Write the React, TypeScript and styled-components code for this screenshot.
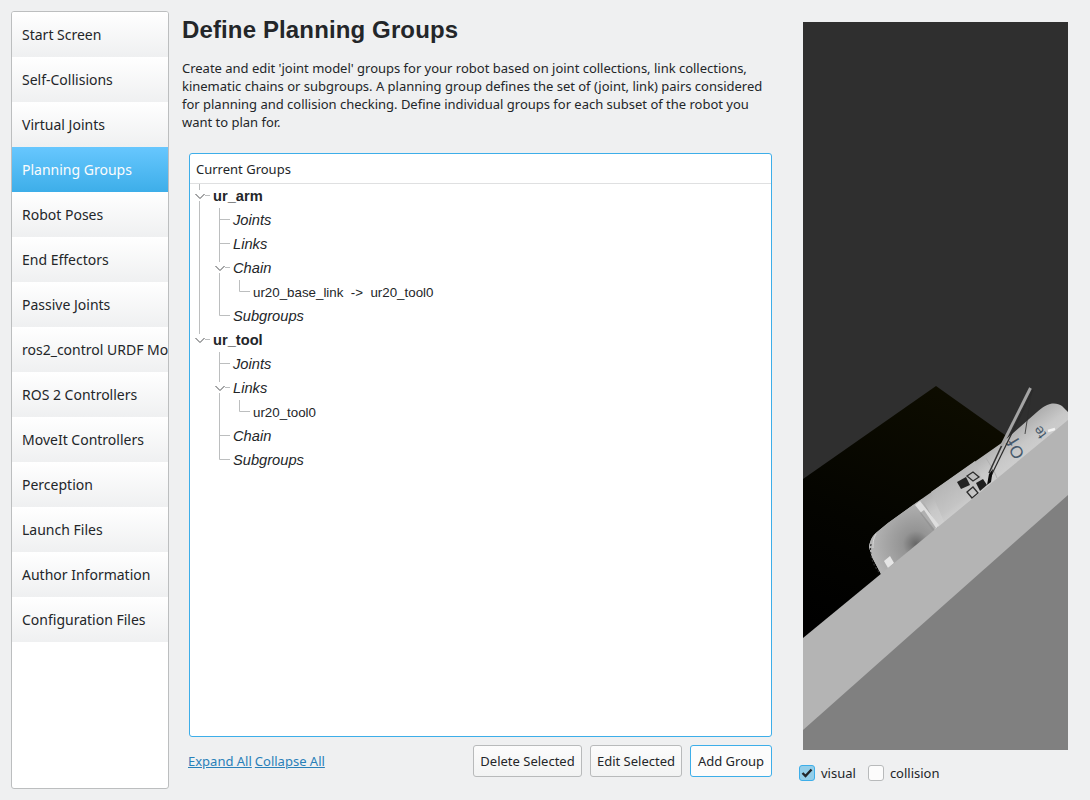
import styled, { createGlobalStyle } from 'styled-components'

const GlobalStyle = createGlobalStyle`
    html, body {
        margin: 0;
        background: #eff0f1;
    }
    body {
        font-family: "Noto Sans", sans-serif;
        font-size: 13px;
        color: #232629;
    }
`

const menuItems = [
    'Start Screen', 'Self-Collisions', 'Virtual Joints', 'Planning Groups', 'Robot Poses',
    'End Effectors', 'Passive Joints', 'ros2_control URDF Mo', 'ROS 2 Controllers',
    'MoveIt Controllers', 'Perception', 'Launch Files', 'Author Information', 'Configuration Files',
]

type Guide = 'none' | 'line' | 'tee' | 'elbow' | 'open' | 'last'
type Kind = 'group' | 'section' | 'leaf'

interface TreeRow {
    guides: Guide[]
    label: string
    kind: Kind
}

const treeRows: TreeRow[] = [
    {guides: ['open'], label: 'ur_arm', kind: 'group'},
    {guides: ['line', 'tee'], label: 'Joints', kind: 'section'},
    {guides: ['line', 'tee'], label: 'Links', kind: 'section'},
    {guides: ['line', 'open'], label: 'Chain', kind: 'section'},
    {guides: ['line', 'line', 'elbow'], label: 'ur20_base_link  ->  ur20_tool0', kind: 'leaf'},
    {guides: ['line', 'elbow'], label: 'Subgroups', kind: 'section'},
    {guides: ['last'], label: 'ur_tool', kind: 'group'},
    {guides: ['none', 'tee'], label: 'Joints', kind: 'section'},
    {guides: ['none', 'open'], label: 'Links', kind: 'section'},
    {guides: ['none', 'line', 'elbow'], label: 'ur20_tool0', kind: 'leaf'},
    {guides: ['none', 'tee'], label: 'Chain', kind: 'section'},
    {guides: ['none', 'elbow'], label: 'Subgroups', kind: 'section'},
]

const TreeGuide = ({type}: { type: Guide }) => (
    <GuideCell viewBox="0 0 20 24">
        {type !== 'none' && (
            <g stroke="#bcbebf" strokeWidth="1" fill="none">
                {type === 'line' && <path d="M9.5 0V24"/>}
                {type === 'tee' && <path d="M9.5 0V24M9.5 11.5H20"/>}
                {type === 'elbow' && <path d="M9.5 0V11.5H20"/>}
                {type === 'open' && <path d="M9.5 0V6M9.5 17V24M15 11.5H20"/>}
                {type === 'last' && <path d="M9.5 0V6M15 11.5H20"/>}
            </g>
        )}
        {(type === 'open' || type === 'last') && (
            <path d="M5.5 10L10 14.5L14.5 10" stroke="#4d4f51" strokeWidth="1" fill="none"/>
        )}
    </GuideCell>
)

const RobotView = () => (
    <ViewSvg viewBox="0 0 265 728">
        <defs>
            <linearGradient id="floor" x1="0.6" y1="0" x2="0.2" y2="1">
                <stop offset="0" stopColor="#0e0d00"/>
                <stop offset="0.6" stopColor="#040400"/>
                <stop offset="1" stopColor="#000000"/>
            </linearGradient>
            <linearGradient id="armBody" gradientUnits="userSpaceOnUse" x1="165" y1="432" x2="195" y2="472">
                <stop offset="0" stopColor="#a4a4a4"/>
                <stop offset="0.5" stopColor="#c8c8c8"/>
                <stop offset="1" stopColor="#d4d4d4"/>
            </linearGradient>
            <linearGradient id="midLink" gradientUnits="userSpaceOnUse" x1="128" y1="466" x2="158" y2="506">
                <stop offset="0" stopColor="#b4b4b4"/>
                <stop offset="0.55" stopColor="#c4c4c4"/>
                <stop offset="1" stopColor="#dedede"/>
            </linearGradient>
            <radialGradient id="elbow" gradientUnits="userSpaceOnUse" cx="113" cy="522" r="44">
                <stop offset="0" stopColor="#666666"/>
                <stop offset="0.3" stopColor="#949494"/>
                <stop offset="1" stopColor="#b4b4b4"/>
            </radialGradient>
        </defs>
        <rect width="265" height="728" fill="#2f2f2f"/>
        <path d="M0 457L133 364L202 413L265 460V620H0Z" fill="url(#floor)"/>

        <path d="M78 552L69 535L66 525C67 518 70 513 74 510L85 501L110 483L200 420L234 390C240 385 243 383 247 382C252 381 256 382 259 384L265 390V450L90 570Z" fill="url(#armBody)"/>
        <path d="M128 470L172 439L192 490L150 520Z" fill="url(#midLink)"/>
        <path d="M78 552L69 535L66 525C67 518 70 513 74 510L85 501L110 483L119 477L138 510L90 560Z" fill="url(#elbow)"/>
        <path d="M112 483L117 479L136 503L132 508Z" fill="#dedede"/>
        <path d="M117 491L121 488L133 506L130 509Z" fill="#8f8f8f" opacity="0.6"/>
        <path d="M68 522C66 532 70 544 77 551" stroke="#303030" strokeWidth="1.2" strokeDasharray="2 2" fill="none"/>
        <path d="M73 512C70 517 70 522 70 526" stroke="#d8d8d8" strokeWidth="1" fill="none"/>
        <path d="M81 539L87 534L91 541L85 546Z" fill="#e6e6e6"/>
        <path d="M183 436C188 444 192 450 194 456" stroke="#b0b0b0" strokeWidth="1" fill="none"/>

        <path d="M154 460L163 455L167 463L158 467Z" fill="#222222"/>
        <path d="M173 461L180 457L184 463L177 469Z" fill="#1e1e1e"/>
        <path d="M164 454L170 450L176 455L170 459Z" fill="none" stroke="#2c2c2c" strokeWidth="1.3"/>
        <path d="M164 470L170 465L175 471L169 476Z" fill="none" stroke="#2c2c2c" strokeWidth="1.3"/>

        <TextureText transform="translate(218.4 427) rotate(-122)" fontSize="17">O</TextureText>
        <TextureText transform="translate(215.5 416.6) rotate(-122)" fontSize="19">f</TextureText>
        <TextureText transform="translate(240.6 407.4) rotate(-126)" fontSize="14">te</TextureText>
        <path d="M245 409L252 407" stroke="#f2f2f2" strokeWidth="2.5" fill="none"/>

        <path d="M229 367L222 412" stroke="#2c2c2c" strokeWidth="0.8" fill="none"/>
        <path d="M230 368L187 456" stroke="#2a2a2a" strokeWidth="1.2" fill="none"/>
        <path d="M227.5 366L198.5 424" stroke="#a4a4a4" strokeWidth="3" fill="none"/>
        <path d="M198.5 424L186 451" stroke="#333333" strokeWidth="1.6" fill="none"/>
        <path d="M184 463L186 452L190 447L188 460Z" fill="#0c0c0c"/>

        <path d="M0 616L265 398V728H0Z" fill="#b4b4b4"/>
        <path d="M0 708L265 473V728H0Z" fill="#808080"/>
    </ViewSvg>
)

export default function App() {
    return (
        <Page>
            <GlobalStyle/>
            <Sidebar>
                {menuItems.map(item => (
                    <MenuItem key={item} $active={item === 'Planning Groups'}>{item}</MenuItem>
                ))}
            </Sidebar>
            <Content>
                <Title>Define Planning Groups</Title>
                <Description>
                    Create and edit 'joint model' groups for your robot based on joint collections, link collections,
                    kinematic chains or subgroups. A planning group defines the set of (joint, link) pairs considered
                    for planning and collision checking. Define individual groups for each subset of the robot you
                    want to plan for.
                </Description>
                <TreePanel>
                    <TreeHeader>Current Groups</TreeHeader>
                    <TreeBody>
                        {treeRows.map((row, i) => (
                            <Row key={i}>
                                {row.guides.map((g, j) => <TreeGuide key={j} type={g}/>)}
                                <RowLabel $kind={row.kind}>{row.label}</RowLabel>
                            </Row>
                        ))}
                    </TreeBody>
                </TreePanel>
                <Footer>
                    <Links>
                        <LinkText href="#">Expand All</LinkText>
                        <LinkText href="#">Collapse All</LinkText>
                    </Links>
                    <Buttons>
                        <Button $width={109}>Delete Selected</Button>
                        <Button $width={92}>Edit Selected</Button>
                        <Button $width={82} $focus>Add Group</Button>
                    </Buttons>
                </Footer>
            </Content>
            <ViewColumn>
                <RobotView/>
                <Toggles>
                    <Toggle>
                        <CheckBox $checked>
                            <svg width="14" height="14" viewBox="0 0 14 14">
                                <path d="M2.5 7L5.5 10L11.5 3.5" stroke="#232629" strokeWidth="2.4" fill="none"/>
                            </svg>
                        </CheckBox>
                        visual
                    </Toggle>
                    <Toggle>
                        <CheckBox/>
                        collision
                    </Toggle>
                </Toggles>
            </ViewColumn>
        </Page>
    )
}

const Page = styled.div`
    width: 1090px;
    height: 800px;
    box-sizing: border-box;
    padding: 11px 22px 11px 11px;
    display: flex;
    overflow: hidden;
`

const Sidebar = styled.div`
    width: 158px;
    height: 778px;
    box-sizing: border-box;
    flex-shrink: 0;
    background: #fff;
    border: 1px solid #bcbebf;
    border-radius: 3px;
    overflow: hidden;
`

const MenuItem = styled.div<{ $active?: boolean }>`
    height: 45px;
    box-sizing: border-box;
    padding-left: 10px;
    display: flex;
    align-items: center;
    white-space: nowrap;
    font-size: 14px;
    color: ${p => p.$active ? '#fcfcfc' : '#232629'};
    background: ${p => p.$active
        ? 'linear-gradient(#67c7fe, #3daee9)'
        : 'linear-gradient(#ffffff, #eff0f1)'};
`

const Content = styled.div`
    width: 590px;
    margin-left: 13px;
    flex-shrink: 0;
`

const Title = styled.h1`
    margin: 0;
    font-family: "Liberation Sans", sans-serif;
    font-size: 24px;
    letter-spacing: 0.13px;
    line-height: 38px;
    font-weight: 700;
    color: #232629;
`

const Description = styled.p`
    margin: 10px 0 0;
    width: 590px;
    font-size: 13px;
    letter-spacing: -0.012px;
    line-height: 18px;
`

const TreePanel = styled.div`
    margin: 22px 0 0 7px;
    width: 583px;
    height: 584px;
    box-sizing: border-box;
    background: #fff;
    border: 1px solid #3daee9;
    border-radius: 3px;
    overflow: hidden;
`

const TreeHeader = styled.div`
    height: 30px;
    box-sizing: border-box;
    padding-left: 6px;
    display: flex;
    align-items: center;
    font-size: 13px;
    border-bottom: 1px solid #dfe0e1;
`

const TreeBody = styled.div`
    display: flex;
    flex-direction: column;
`

const Row = styled.div`
    height: 24px;
    display: flex;
    align-items: center;
`

const GuideCell = styled.svg`
    width: 20px;
    height: 24px;
    flex-shrink: 0;
    display: block;
`

const RowLabel = styled.span<{ $kind: Kind }>`
    margin-left: 3px;
    white-space: pre;
    font-family: "Liberation Sans", sans-serif;
    font-size: ${p => p.$kind === 'leaf' ? '13.33px' : '14.67px'};
    font-weight: ${p => p.$kind === 'group' ? 700 : 400};
    font-style: ${p => p.$kind === 'section' ? 'italic' : 'normal'};
`

const Footer = styled.div`
    margin: 8px 0 0 6px;
    width: 584px;
    height: 32px;
    display: flex;
    align-items: center;
    justify-content: space-between;
`

const Links = styled.div`
    display: flex;
    gap: 3px;
`

const LinkText = styled.a`
    color: #2980b9;
    font-size: 13px;
`

const Buttons = styled.div`
    display: flex;
    gap: 8px;
`

const Button = styled.button<{ $focus?: boolean; $width: number }>`
    width: ${p => p.$width}px;
    height: 32px;
    box-sizing: border-box;
    padding: 0;
    font-family: inherit;
    font-size: 13px;
    color: #232629;
    background: ${p => p.$focus ? '#fcfcfc' : 'linear-gradient(#fcfcfc, #f2f3f3)'};
    border: 1px solid ${p => p.$focus ? '#3daee9' : '#b8babb'};
    border-radius: 3px;
`

const ViewColumn = styled.div`
    width: 265px;
    margin-left: 31px;
    padding-top: 11px;
    flex-shrink: 0;
`

const ViewSvg = styled.svg`
    display: block;
    width: 265px;
    height: 728px;
`

const TextureText = styled.text`
    font-family: "Liberation Sans", sans-serif;
    fill: #46596b;
    text-anchor: middle;
`

const Toggles = styled.div`
    margin: 14px 0 0 -4px;
    display: flex;
    gap: 12px;
`

const Toggle = styled.label`
    display: flex;
    align-items: center;
    gap: 6px;
    height: 18px;
    font-size: 13px;
`

const CheckBox = styled.span<{ $checked?: boolean }>`
    width: 16px;
    height: 16px;
    box-sizing: border-box;
    display: flex;
    align-items: center;
    justify-content: center;
    border-radius: 3px;
    border: 1px solid ${p => p.$checked ? '#3daee9' : '#b8babb'};
    background: ${p => p.$checked ? '#93cee9' : '#fcfcfc'};
`
